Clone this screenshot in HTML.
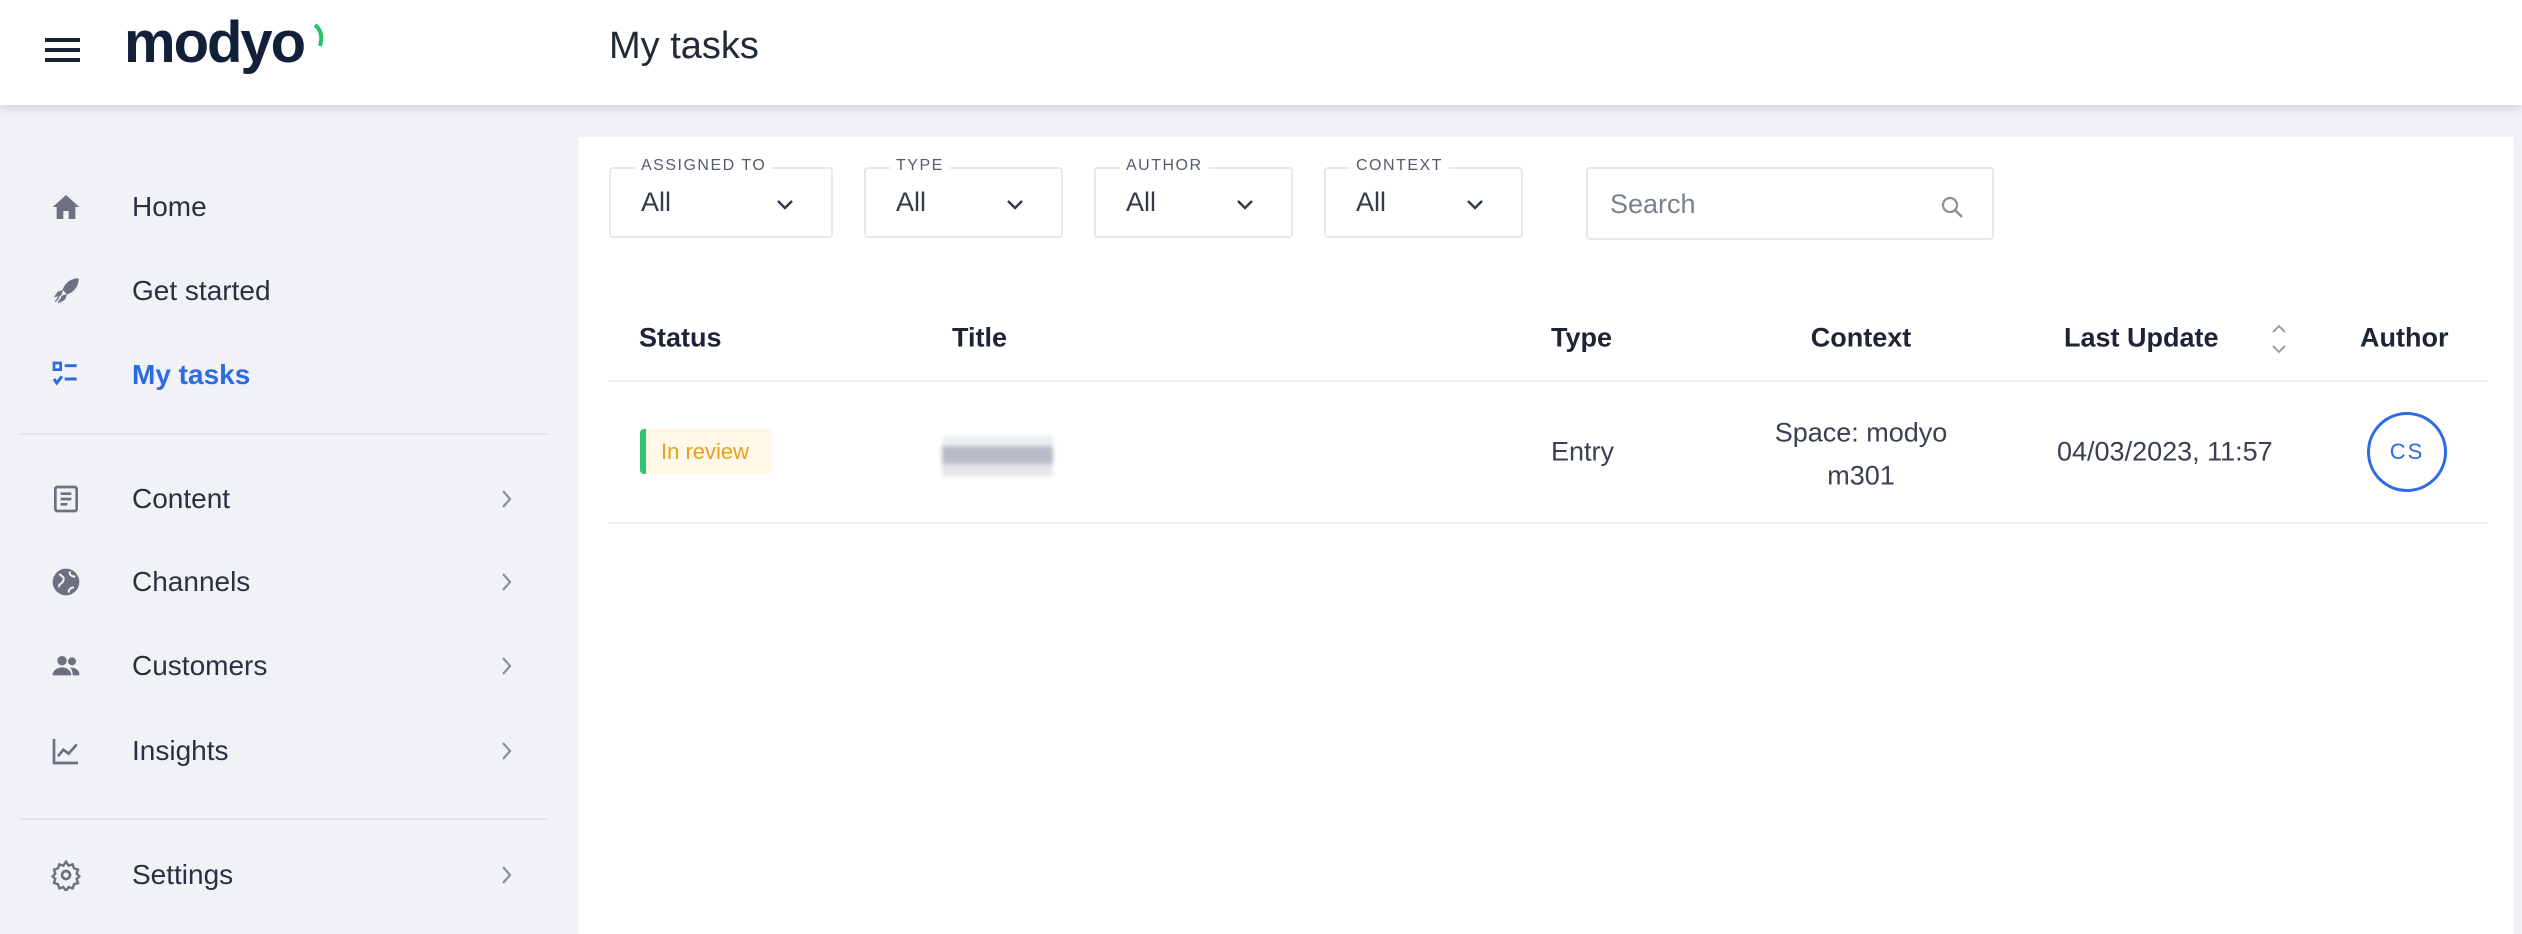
<!DOCTYPE html>
<html><head><meta charset="utf-8"><style>
*{box-sizing:border-box;margin:0;padding:0}
body{width:2522px;height:934px;overflow:hidden;background:#f1f2f6;font-family:"Liberation Sans",sans-serif;color:#1d2433;position:relative}
.abs{position:absolute}
header{position:absolute;left:0;top:0;width:2522px;height:105px;background:#fff;box-shadow:0 4px 10px rgba(0,0,0,.12);z-index:2}
.main{position:absolute;left:579px;top:137px;width:1935px;height:797px;background:#fff}
.nav{position:absolute;left:132px;font-size:28px;color:#2a3040;transform:translateY(-50%)}
.ic{position:absolute;left:50px;width:32px;height:32px;transform:translateY(-50%)}
.chev{position:absolute;left:500px;transform:translateY(-50%)}
.div{position:absolute;left:19px;width:528px;height:2px;background:#e2e4ea}
.sel{position:absolute;top:167px;height:71px;border:2px solid #e6e8ec;border-radius:4px;background:#fff}
.sel .lb{position:absolute;top:-12px;left:24px;background:#fff;padding:0 6px;font-size:16px;letter-spacing:1.5px;color:#555b68}
.sel .v{position:absolute;left:30px;top:18px;font-size:27px;color:#333a48}
.sel svg{position:absolute;right:36px;top:30px}
.th{position:absolute;top:338px;font-size:27px;font-weight:bold;transform:translateY(-50%);color:#1d2433}
.td{position:absolute;font-size:27px;color:#3a4050;transform:translateY(-50%)}
</style></head><body>
<header>
<div class="abs" style="left:45px;top:38px;width:35px;height:4px;background:#1a2236"></div>
<div class="abs" style="left:45px;top:48px;width:35px;height:4px;background:#1a2236"></div>
<div class="abs" style="left:45px;top:58px;width:35px;height:4px;background:#1a2236"></div>
<div class="abs" style="left:124px;top:14px;font-size:58px;font-weight:bold;letter-spacing:-2px;color:#14203a;line-height:1">modyo</div>
<svg class="abs" style="left:312px;top:22px" width="16" height="30"><path d="M3 3 Q12 10 8 24" stroke="#22c36a" stroke-width="4" fill="none"/></svg>
<div class="abs" style="left:609px;top:25px;font-size:38px;color:#222a38">My tasks</div>
</header>

<svg class="ic" style="top:207px" viewBox="0 0 24 24"><path d="M12 3 2 12h3v9h5v-6h4v6h5v-9h3z" fill="#6b7180"/></svg>
<div class="nav" style="top:207px">Home</div>
<svg class="ic" style="top:291px" viewBox="0 0 24 24"><path d="M21 3c-5 0-9 3-11 8l3 3c5-2 8-6 8-11zM9 12l-3 1-2 3 4-1zM12 15l-1 3-3 2 1-4zM4 20l3-4M6 21l2-3" fill="#6b7180" stroke="#6b7180" stroke-width="1"/></svg>
<div class="nav" style="top:291px">Get started</div>
<svg class="ic" style="top:375px" viewBox="0 0 24 24"><rect x="3" y="3" width="5" height="5" fill="none" stroke="#2c6be0" stroke-width="2"/><path d="M11 5h9M11 15h9M3 15l2 3 4-5" stroke="#2c6be0" stroke-width="2.2" fill="none"/></svg>
<div class="nav" style="top:375px;color:#2c6be0;font-weight:bold">My tasks</div>
<div class="div" style="top:433px"></div>
<svg class="ic" style="top:499px" viewBox="0 0 24 24"><rect x="4" y="3" width="16" height="18" rx="1.5" fill="none" stroke="#6b7180" stroke-width="2"/><path d="M8 8h8M8 12h8M8 16h5" stroke="#6b7180" stroke-width="2"/></svg>
<div class="nav" style="top:499px">Content</div>
<svg class="ic" style="top:582px" viewBox="0 0 24 24"><circle cx="12" cy="12" r="10" fill="#6b7180"/><path d="M7 6c2 2 4 2 3 5s-4 2-3 5M15 4c-1 3 2 4 4 4M14 20c0-3 2-4 4-4" stroke="#f1f2f6" stroke-width="1.5" fill="none"/></svg>
<div class="nav" style="top:582px">Channels</div>
<svg class="ic" style="top:666px" viewBox="0 0 24 24"><circle cx="9" cy="8" r="3.5" fill="#6b7180"/><circle cx="16.5" cy="8.5" r="3" fill="#6b7180"/><path d="M2 19c0-4 4-6 7-6s7 2 7 6zM15 13c3 0 7 1.5 7 5v1h-5c0-3-1-5-2-6z" fill="#6b7180"/></svg>
<div class="nav" style="top:666px">Customers</div>
<svg class="ic" style="top:751px" viewBox="0 0 24 24"><path d="M3 3v18h18M6 16l4-5 4 3 6-7" stroke="#6b7180" stroke-width="2" fill="none"/></svg>
<div class="nav" style="top:751px">Insights</div>
<div class="div" style="top:818px"></div>
<svg class="ic" style="top:875px" viewBox="0 0 24 24"><circle cx="12" cy="12" r="3" fill="none" stroke="#6b7180" stroke-width="2"/><path d="M12 2l2 3 3-1 1 3 3 1-1 3 2 2-2 2 1 3-3 1-1 3-3-1-2 3-2-3-3 1-1-3-3-1 1-3-2-2 2-2-1-3 3-1 1-3 3 1z" fill="none" stroke="#6b7180" stroke-width="1.8"/></svg>
<div class="nav" style="top:875px">Settings</div>
<svg class="chev" style="top:499px" width="14" height="22"><path d="M3 3l7 8-7 8" stroke="#8a8f9a" stroke-width="2.2" fill="none"/></svg>
<svg class="chev" style="top:582px" width="14" height="22"><path d="M3 3l7 8-7 8" stroke="#8a8f9a" stroke-width="2.2" fill="none"/></svg>
<svg class="chev" style="top:666px" width="14" height="22"><path d="M3 3l7 8-7 8" stroke="#8a8f9a" stroke-width="2.2" fill="none"/></svg>
<svg class="chev" style="top:751px" width="14" height="22"><path d="M3 3l7 8-7 8" stroke="#8a8f9a" stroke-width="2.2" fill="none"/></svg>
<svg class="chev" style="top:875px" width="14" height="22"><path d="M3 3l7 8-7 8" stroke="#8a8f9a" stroke-width="2.2" fill="none"/></svg>

<div class="main"></div>

<div class="sel" style="left:609px;width:224px"><span class="lb">ASSIGNED TO</span><span class="v">All</span><svg width="20" height="12"><path d="M3 2l7 7 7-7" stroke="#333a48" stroke-width="2.5" fill="none"/></svg></div>
<div class="sel" style="left:864px;width:199px"><span class="lb">TYPE</span><span class="v">All</span><svg width="20" height="12"><path d="M3 2l7 7 7-7" stroke="#333a48" stroke-width="2.5" fill="none"/></svg></div>
<div class="sel" style="left:1094px;width:199px"><span class="lb">AUTHOR</span><span class="v">All</span><svg width="20" height="12"><path d="M3 2l7 7 7-7" stroke="#333a48" stroke-width="2.5" fill="none"/></svg></div>
<div class="sel" style="left:1324px;width:199px"><span class="lb">CONTEXT</span><span class="v">All</span><svg width="20" height="12"><path d="M3 2l7 7 7-7" stroke="#333a48" stroke-width="2.5" fill="none"/></svg></div>
<div class="sel" style="left:1586px;width:408px;height:73px"><span class="v" style="left:22px;top:20px;color:#7a808c">Search</span><svg style="right:26px;top:26px" width="26" height="26"><circle cx="10" cy="10" r="7" stroke="#8a8f9a" stroke-width="2.2" fill="none"/><path d="M15 15l7 7" stroke="#8a8f9a" stroke-width="2.5"/></svg></div>

<div class="th" style="left:639px">Status</div>
<div class="th" style="left:952px">Title</div>
<div class="th" style="left:1551px">Type</div>
<div class="th" style="left:1861px;transform:translate(-50%,-50%)">Context</div>
<div class="th" style="left:2064px">Last Update</div>
<svg class="abs" style="left:2270px;top:322px" width="18" height="34"><path d="M3 10l6-6 6 6M3 24l6 6 6-6" stroke="#9aa0aa" stroke-width="2" fill="none"/></svg>
<div class="th" style="left:2360px">Author</div>
<div class="abs" style="left:609px;top:380px;width:1879px;height:2px;background:#eef0f3"></div>
<div class="abs" style="left:609px;top:522px;width:1879px;height:2px;background:#eef0f3"></div>

<div class="abs" style="left:640px;top:429px;width:132px;height:45px;background:#fff8e8;border-radius:4px;border-left:6px solid #2fc46d"></div>
<div class="td" style="left:661px;top:452px;font-size:22px;color:#e3a21a">In review</div>
<div class="abs" style="left:942px;top:436px;width:111px;height:40px;background:linear-gradient(#eceef2 0 25%,#b8bcc6 25% 70%,#e4e6ea 70%);filter:blur(2px)"></div>
<div class="td" style="left:1551px;top:452px">Entry</div>
<div class="td" style="left:1861px;top:433px;transform:translate(-50%,-50%)">Space: modyo</div>
<div class="td" style="left:1861px;top:476px;transform:translate(-50%,-50%)">m301</div>
<div class="td" style="left:2057px;top:452px">04/03/2023, 11:57</div>
<div class="abs" style="left:2367px;top:412px;width:80px;height:80px;border:3px solid #2c6be0;border-radius:50%;color:#2c6be0;font-size:22px;letter-spacing:2px;display:flex;align-items:center;justify-content:center">CS</div>
</body></html>
